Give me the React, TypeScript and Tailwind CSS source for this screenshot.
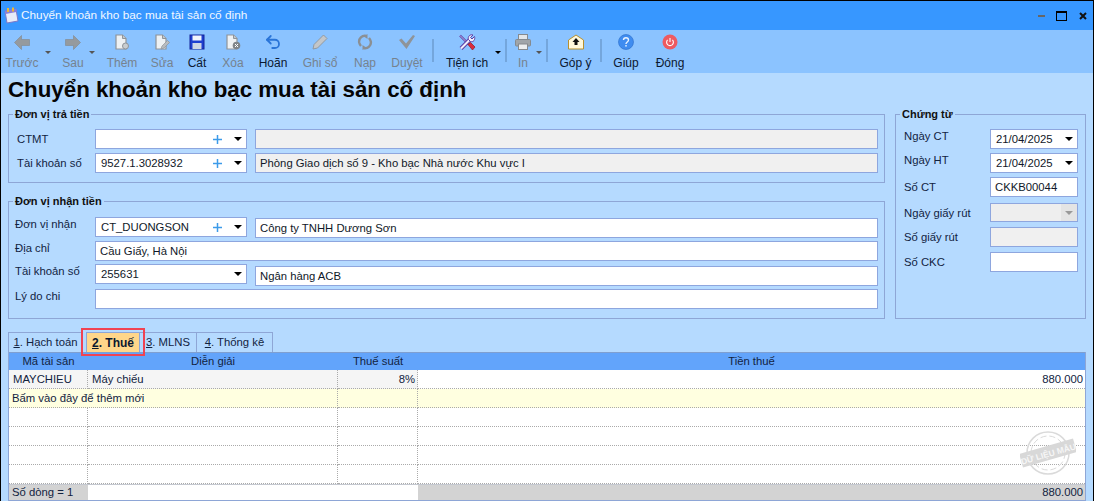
import { ReactNode } from 'react';
import { Undo2 } from 'lucide-react';

const GRAY = '#8f9499';

const ArrowLeft = () => (
  <svg width="16" height="15" viewBox="0 0 16 15">
    <path d="M0.5 7.5 L7.5 0.5 V4.5 H15.5 V10.5 H7.5 V14.5 Z" fill="#959a9e" stroke="#83888c" strokeWidth="0.6" />
  </svg>
);
const ArrowRight = () => (
  <svg width="16" height="15" viewBox="0 0 16 15">
    <path d="M15.5 7.5 L8.5 0.5 V4.5 H0.5 V10.5 H8.5 V14.5 Z" fill="#959a9e" stroke="#83888c" strokeWidth="0.6" />
  </svg>
);
const Doc = ({ children }: { children?: ReactNode }) => (
  <svg width="16" height="16" viewBox="0 0 16 16">
    <path d="M2 1 H8.5 L12 4.5 V15 H2 Z" fill="#eef1f3" stroke={GRAY} strokeWidth="1.2" />
    <path d="M8.5 1 V4.5 H12" fill="#c4c8cc" stroke={GRAY} strokeWidth="1" />
    {children}
  </svg>
);
const Floppy = () => (
  <svg width="16" height="16" viewBox="0 0 16 16">
    <rect x="1" y="1" width="14" height="14" fill="#1f3fd0" stroke="#14249a" />
    <rect x="3.5" y="1.5" width="9" height="5" fill="#f2f5fb" />
    <rect x="3.5" y="9" width="9" height="6" fill="#cfd6e4" />
  </svg>
);
const Pencil = () => (
  <svg width="16" height="16" viewBox="0 0 16 16">
    <path d="M1 15 L2 10.5 L11.5 1 L15 4.5 L5.5 14 Z" fill="#c3c6c9" stroke="#8f9499" strokeWidth="0.9" />
  </svg>
);
const Reload = () => (
  <svg width="16" height="16" viewBox="0 0 16 16" fill="none" stroke="#8b8f93" strokeWidth="2.4">
    <path d="M9.5 2 C5 1 1.5 4.5 2.2 8.5 C2.5 10 3.2 11 4 12" />
    <path d="M6.5 14 C11 15 14.5 11.5 13.8 7.5 C13.5 6 12.8 5 12 4" />
    <path d="M10.5 0 V5 L7 2.5 Z" fill="#8b8f93" stroke="none" />
    <path d="M5.5 16 V11 L9 13.5 Z" fill="#8b8f93" stroke="none" />
  </svg>
);
const Check = () => (
  <svg width="16" height="16" viewBox="0 0 16 16">
    <path d="M0 6 L2.5 4.5 L7 9.5 L14 1 L16 2 L7.5 15 Z" fill="#8f9499" />
  </svg>
);
const Tools = () => (
  <svg width="18" height="17" viewBox="0 0 18 17">
    {/* screwdriver */}
    <path d="M2 1.5 L11 10.5" stroke="#5b3fa8" strokeWidth="2.4" fill="none" />
    <path d="M2 1.5 L11 10.5" stroke="#d9d2f0" strokeWidth="0.8" fill="none" />
    {/* wrench */}
    <path d="M3 14.5 L12 5.5" stroke="#5b3fa8" strokeWidth="4" fill="none" />
    <path d="M3 14.5 L12 5.5" stroke="#f1eefa" strokeWidth="2" fill="none" />
    <path d="M16.5 2.5 L14 5 L12.5 3.5 L15 1 C12 0 9.5 2.5 10.5 5.5 L12.5 7.5 C15.5 8.5 17.5 5.5 16.5 2.5 Z" fill="#f1eefa" stroke="#5b3fa8" strokeWidth="1" />
    {/* handle */}
    <path d="M10 10.5 L12.5 8.5 L17 13 L14.5 16 Z" fill="#dc2b3c" stroke="#8c1c28" strokeWidth="0.7" />
  </svg>
);
const Printer = () => (
  <svg width="16" height="16" viewBox="0 0 16 16">
    <rect x="3.5" y="0.5" width="9" height="5" fill="#e4e6e8" stroke="#858a8f" />
    <rect x="0.5" y="5.5" width="15" height="6.5" rx="1" fill="#a0a5a9" stroke="#858a8f" />
    <rect x="3.5" y="10" width="9" height="5.5" fill="#eceeef" stroke="#858a8f" />
  </svg>
);
const Mail = () => (
  <svg width="16" height="16" viewBox="0 0 16 16">
    <path d="M0.5 6 L8 1 L15.5 6 V15 H0.5 Z" fill="#fff8dc" stroke="#b8902f" />
    <path d="M8 4 L11.5 8 H9.5 V11 H6.5 V8 H4.5 Z" fill="#111" />
  </svg>
);
const Help = () => (
  <svg width="16" height="16" viewBox="0 0 16 16">
    <circle cx="8" cy="8" r="7.5" fill="#3f8cf0" stroke="#2a6cc8" strokeWidth="0.6" />
    <path d="M5.5 6 C5.5 3 10.5 3 10.5 6 C10.5 8 8 8 8 10" fill="none" stroke="#e8f2ff" strokeWidth="1.4" />
    <rect x="7.3" y="11" width="1.4" height="1.6" fill="#e8f2ff" />
  </svg>
);
const Power = () => (
  <svg width="16" height="16" viewBox="0 0 16 16">
    <circle cx="8" cy="8" r="7.5" fill="#ee5a60" />
    <path d="M5.6 5.8 A3.4 3.4 0 1 0 10.4 5.8" fill="none" stroke="#fff" strokeWidth="1.1" />
    <path d="M8 4 V8" stroke="#fff" strokeWidth="1.1" />
  </svg>
);
const Plus = () => (
  <svg width="9" height="9" viewBox="0 0 9 9" className="mr-[12px] shrink-0">
    <path d="M4.5 0 V9 M0 4.5 H9" stroke="#3d9be9" strokeWidth="1.5" />
  </svg>
);

function ToolBtn({ label, icon, w, off }: { label: string; icon: ReactNode; w: string; off?: boolean }) {
  return (
    <div className={`flex flex-col items-center shrink-0 ${w}`}>
      <div className="h-[18px] flex items-center justify-center">{icon}</div>
      <span className={`mt-[5px] text-[12px] leading-[14px] whitespace-nowrap ${off ? 'text-[#76828e]' : 'text-[#0c1830]'}`}>{label}</span>
    </div>
  );
}

const Caret = ({ w, off }: { w: string; off?: boolean }) => (
  <div className={`shrink-0 flex justify-center pt-[18px] ${w}`}>
    <div className={`w-0 h-0 border-x-[3.5px] border-x-transparent border-t-[3.5px] ${off ? 'border-t-[#555]' : 'border-t-black'}`} />
  </div>
);

const Sep = ({ w }: { w: string }) => (
  <div className={`shrink-0 flex justify-center pt-[6px] ${w}`}>
    <div className="w-[2px] h-[23px] bg-[#74a6dc]" />
  </div>
);

const Legend = ({ children }: { children: ReactNode }) => (
  <legend className="ml-[4px] px-[2px] text-[11px] font-bold leading-[14px] text-[#101010]">{children}</legend>
);

function Combo({ value, plus, w = 'w-[152px]' }: { value?: string; plus?: boolean; w?: string }) {
  return (
    <div className={`${w} h-[20px] shrink-0 bg-white border border-[#8ea6de] flex items-center pl-[5px]`}>
      <span className="flex-1 text-[#101828]">{value}</span>
      {plus && <Plus />}
      <div className="w-0 h-0 mr-[4px] border-x-[4px] border-x-transparent border-t-[4px] border-t-black" />
    </div>
  );
}

const TextBox = ({ value, off, className = '' }: { value?: string; off?: boolean; className?: string }) => (
  <div className={`h-[20px] border border-[#8ea6de] flex items-center pl-[4px] ${off ? 'bg-[#f0f0f0]' : 'bg-white'} ${className}`}>
    <span className="text-[#101828]">{value}</span>
  </div>
);

function DocRow({ label, children, className = '' }: { label: string; children: ReactNode; className?: string }) {
  return (
    <div className={`flex ${className}`}>
      <span className="w-[86px] shrink-0 leading-[14px] text-[#12233f]">{label}</span>
      {children}
    </div>
  );
}

const cell = 'h-[19px] border-r border-b border-dotted border-[#aaa] whitespace-nowrap px-[4px] leading-[18px]';

function EmptyRow() {
  return (
    <>
      <div className={cell} />
      <div className={cell} />
      <div className={cell} />
      <div className={`${cell} border-r-0`} />
    </>
  );
}

export default function App() {
  return (
    <div
      className="relative w-[1094px] h-[501px] overflow-hidden border-x border-t border-black bg-[#b5daff] text-[11.3px] flex flex-col"
      style={{ fontFamily: '"Liberation Sans", Arial, sans-serif' }}
    >
      {/* title bar */}
      <div className="h-[29px] shrink-0 bg-[#3797ff] flex items-center pl-[2px] pr-[5px]">
        <svg width="17" height="17" viewBox="0 0 17 17" className="mr-px">
          <path d="M2 4 L13 2 L15 14 L4 16 Z" fill="#e9ecf8" stroke="#7c78c8" />
          <path d="M2 4 L13 2 L13.5 5 L2.5 7 Z" fill="#8a7fd8" />
          <rect x="4" y="1" width="2" height="4" fill="#e8b83a" />
          <rect x="9" y="0.5" width="2" height="4" fill="#e8b83a" />
        </svg>
        <span className="flex-1 text-[#f2f8ff] text-[11.8px]">Chuyển khoản kho bạc mua tài sản cố định</span>
        <div className="w-[7px] h-[2px] bg-[#666] mr-[11px]" />
        <div className="w-[11px] h-[10px] border border-black border-t-[2px] mr-[12px]" />
        <svg width="8" height="8" viewBox="0 0 8 8" className="mr-px">
          <path d="M1 1 L7 7 M7 1 L1 7" stroke="#111" strokeWidth="2" />
        </svg>
      </div>

      {/* toolbar */}
      <div className="h-[43px] shrink-0 bg-[#8bc3ff] flex pl-[3px] pt-[3px]">
        <ToolBtn w="w-[36px]" off label="Trước" icon={<ArrowLeft />} />
        <Caret w="w-[16px]" off />
        <div className="w-[2px] shrink-0" />
        <ToolBtn w="w-[30px]" off label="Sau" icon={<ArrowRight />} />
        <Caret w="w-[8px]" off />
        <ToolBtn w="w-[52px]" off label="Thêm" icon={<Doc><circle cx="11.5" cy="12" r="3" fill="#c9cdd0" stroke={GRAY} /></Doc>} />
        <ToolBtn w="w-[28px]" off label="Sửa" icon={<Doc><path d="M7 15 L8 12 L13.5 6.5 L15.5 8.5 L10 14 Z" fill="#b8bcc0" stroke={GRAY} strokeWidth="0.7" /></Doc>} />
        <ToolBtn w="w-[42px]" label="Cất" icon={<Floppy />} />
        <ToolBtn w="w-[30px]" off label="Xóa" icon={<Doc><circle cx="11.5" cy="11.5" r="3.8" fill="#7f8488" /><path d="M10 10 L13 13 M13 10 L10 13" stroke="#fff" /></Doc>} />
        <ToolBtn w="w-[50px]" label="Hoãn" icon={<Undo2 size={18} color="#2a75d8" strokeWidth={2.4} />} />
        <ToolBtn w="w-[44px]" off label="Ghi sổ" icon={<Pencil />} />
        <ToolBtn w="w-[46px]" off label="Nạp" icon={<Reload />} />
        <ToolBtn w="w-[38px]" off label="Duyệt" icon={<Check />} />
        <Sep w="w-[14px]" />
        <ToolBtn w="w-[54px]" label="Tiện ích" icon={<Tools />} />
        <Caret w="w-[8px]" />
        <Sep w="w-[8px]" />
        <ToolBtn w="w-[26px]" off label="In" icon={<Printer />} />
        <Caret w="w-[6px]" off />
        <Sep w="w-[10px]" />
        <ToolBtn w="w-[47px]" label="Góp ý" icon={<Mail />} />
        <Sep w="w-[3px]" />
        <ToolBtn w="w-[48px]" label="Giúp" icon={<Help />} />
        <ToolBtn w="w-[40px]" label="Đóng" icon={<Power />} />
      </div>

      <h1 className="pl-[7px] pt-[3px] h-[32px] shrink-0 text-[22.3px] leading-[28px] font-bold text-[#050505]">
        Chuyển khoản kho bạc mua tài sản cố định
      </h1>

      {/* form */}
      <div className="flex pl-[7px] h-[214px] shrink-0 pt-[2px]">
        <div className="w-[877px] shrink-0 flex flex-col">
          <fieldset className="h-[76px] shrink-0 border border-[#8ea6d6]">
            <Legend>Đơn vị trả tiền</Legend>
            <div className="pl-[8px] pt-[8px]">
              <div className="flex items-center h-[20px]">
                <span className="w-[78px] text-[#12233f]">CTMT</span>
                <Combo plus />
                <TextBox off className="w-[623px] ml-[8px]" />
              </div>
              <div className="flex items-center h-[20px] mt-[4px]">
                <span className="w-[78px] text-[#12233f]">Tài khoản số</span>
                <Combo plus value="9527.1.3028932" />
                <TextBox off className="w-[623px] ml-[8px]" value="Phòng Giao dịch số 9 - Kho bạc Nhà nước Khu vực I" />
              </div>
            </div>
          </fieldset>
          <fieldset className="h-[125px] shrink-0 border border-[#8ea6d6] mt-[11px]">
            <Legend>Đơn vị nhận tiền</Legend>
            <div className="pl-[6px] pt-[9px]">
              <div className="flex h-[20px]">
                <span className="w-[80px] text-[#12233f] leading-[14px]">Đơn vị nhận</span>
                <Combo plus value="CT_DUONGSON" />
                <TextBox className="w-[623px] ml-[8px] mt-[1px]" value="Công ty TNHH Dương Sơn" />
              </div>
              <div className="flex h-[20px] mt-[4px]">
                <span className="w-[80px] text-[#12233f] leading-[14px]">Địa chỉ</span>
                <TextBox className="w-[783px]" value="Cầu Giấy, Hà Nội" />
              </div>
              <div className="flex h-[20px] mt-[3px]">
                <span className="w-[80px] text-[#12233f] leading-[14px]">Tài khoản số</span>
                <Combo value="255631" />
                <TextBox className="w-[623px] ml-[8px] mt-[2px]" value="Ngân hàng ACB" />
              </div>
              <div className="flex h-[20px] mt-[5px]">
                <span className="w-[80px] text-[#12233f] leading-[14px]">Lý do chi</span>
                <TextBox className="w-[783px]" />
              </div>
            </div>
          </fieldset>
        </div>
        <fieldset className="w-[191px] h-[212px] ml-[10px] shrink-0 border border-[#8ea6d6]">
          <Legend>Chứng từ</Legend>
          <div className="pl-[8px] pt-[8px]">
            <DocRow label="Ngày CT">
              <Combo value="21/04/2025" w="w-[88px]" />
            </DocRow>
            <DocRow label="Ngày HT" className="mt-[4px]">
              <Combo value="21/04/2025" w="w-[88px]" />
            </DocRow>
            <DocRow label="Số CT" className="mt-[4px] items-center">
              <TextBox className="w-[88px]" value="CKKB00044" />
            </DocRow>
            <DocRow label="Ngày giấy rút" className="mt-[6px] items-center">
              <div className="w-[88px] h-[19px] bg-[#eeeeee] border border-[#8ea6de] flex items-center justify-end">
                <div className="w-[16px] h-full bg-[#e4e4e4] flex items-center justify-center">
                  <div className="w-0 h-0 border-x-[4px] border-x-transparent border-t-[4px] border-t-[#999]" />
                </div>
              </div>
            </DocRow>
            <DocRow label="Số giấy rút" className="mt-[5px] items-center">
              <TextBox off className="w-[88px]" />
            </DocRow>
            <DocRow label="Số CKC" className="mt-[5px] items-center">
              <TextBox className="w-[88px]" />
            </DocRow>
          </div>
        </fieldset>
      </div>

      {/* tabs */}
      <div className="flex pl-[7px] h-[20px] mt-[13px] shrink-0">
        <div className="w-[75px] h-[20px] border border-b-0 border-[#8ea6d6] flex items-center justify-center text-[#12233f]"><span><u>1</u>. Hạch toán</span></div>
        <div className="relative w-[54px] h-[20px] ml-[3px] bg-[#ffd68a] border border-b-0 border-[#8ea6d6] flex items-center justify-center font-bold text-[12px] text-[#0c1830]">
          <span><u>2</u>. Thuế</span>
          <div className="absolute -left-[6px] -right-[6px] -top-[5px] -bottom-[4px] z-10 border-2 border-[#f04352]" />
        </div>
        <div className="w-[57px] h-[20px] border border-b-0 border-l-0 border-[#8ea6d6] flex items-center justify-center text-[#12233f]"><span><u>3</u>. MLNS</span></div>
        <div className="w-[76px] h-[20px] border border-b-0 border-l-0 border-[#8ea6d6] flex items-center justify-center text-[#12233f]"><span><u>4</u>. Thống kê</span></div>
      </div>

      {/* grid */}
      <div className="relative ml-[7px] w-[1078px] flex-1 border-x border-b border-[#8ea6d6] bg-white text-[#12233f]">
        <div className="grid grid-cols-[79px_250px_80px_1fr] h-[18px] bg-[#62a4fb] border-t border-[#7f9fd0] text-center leading-[17px]">
          <span>Mã tài sản</span>
          <span>Diễn giải</span>
          <span>Thuế suất</span>
          <span>Tiền thuế</span>
        </div>
        <div className="grid grid-cols-[79px_250px_80px_1fr]">
          <div className={`${cell} bg-[#f5f5f5]`}>MAYCHIEU</div>
          <div className={`${cell} bg-[#f5f5f5]`}>Máy chiếu</div>
          <div className={`${cell} bg-[#f5f5f5] text-right pr-[2px]`}>8%</div>
          <div className={`${cell} border-r-0 text-right pr-[2px]`}>880.000</div>

          <div className={`${cell} col-span-2 bg-[#ffffe0] pl-[3px]`}>Bấm vào đây để thêm mới</div>
          <div className={`${cell} bg-[#ffffe0]`} />
          <div className={`${cell} bg-[#ffffe0] border-r-0`} />

          <EmptyRow />
          <EmptyRow />
          <EmptyRow />
          <EmptyRow />
        </div>
        <div className="grid grid-cols-[79px_330px_1fr] h-[15px] leading-[15px] border-t border-[#c4c8d0]">
          <div className="bg-[#d3d3d3] pl-[3px]">Số dòng = 1</div>
          <div className="bg-white" />
          <div className="bg-[#d3d3d3] text-right pr-[2px]">880.000</div>
        </div>

        {/* sample watermark */}
        <svg width="56" height="48" viewBox="0 0 56 48" className="absolute left-[1011px] top-[77px]">
          <g fill="none" stroke="#dadada">
            <circle cx="28" cy="24" r="21" strokeWidth="1.5" />
            <circle cx="28" cy="24" r="17" strokeWidth="1" strokeDasharray="6 3" />
          </g>
          <g transform="rotate(-16 28 24)">
            <rect x="0" y="17" width="56" height="14" fill="#d8d8d8" />
            <text x="28" y="28" textAnchor="middle" fontSize="8.5" fontWeight="bold" fill="#f6f6f6">DỮ LIỆU MẪU</text>
          </g>
        </svg>
      </div>
    </div>
  );
}
